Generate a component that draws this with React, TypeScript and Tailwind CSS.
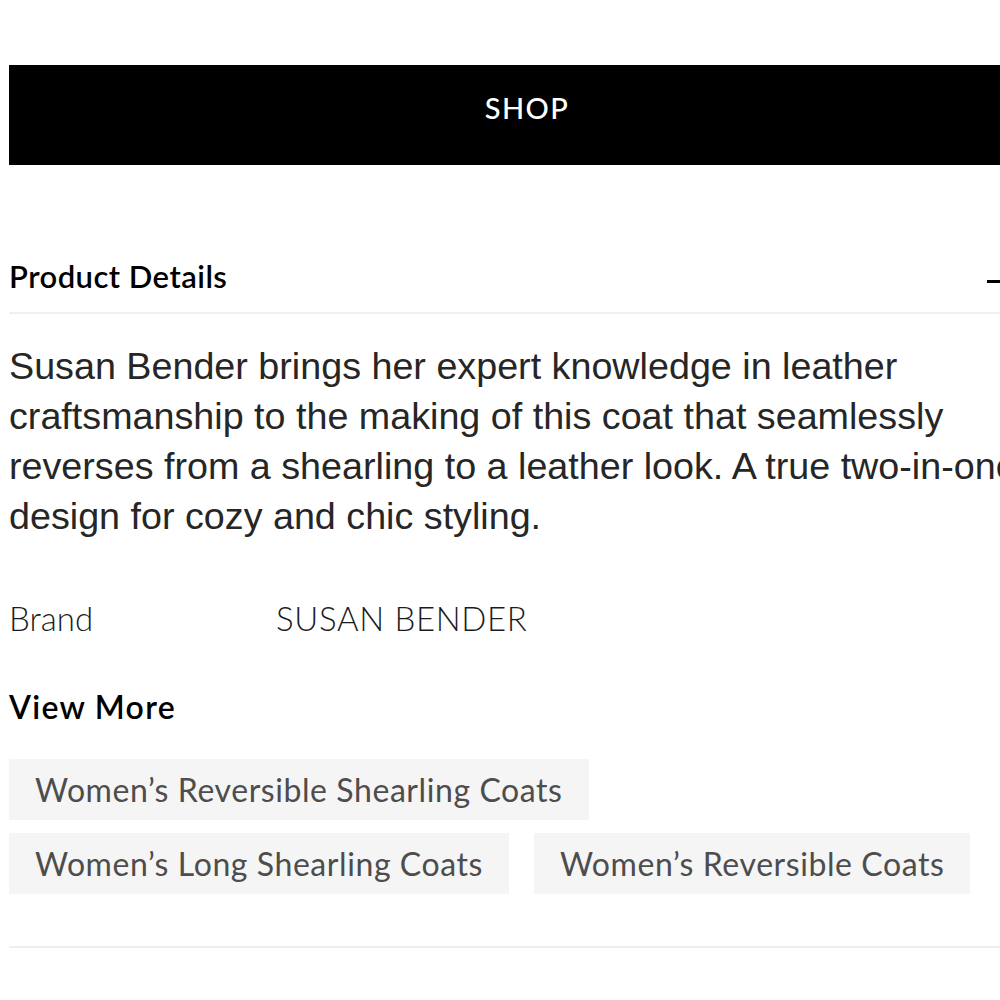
const chips = [
  "Women’s Reversible Shearling Coats",
  "Women’s Long Shearling Coats",
  "Women’s Reversible Coats",
];

const jost = "font-['Lato','Noto_Sans',sans-serif]";

export default function App() {
  return (
    <div className="w-[1000px] h-[1000px] overflow-hidden bg-white">
      <div className="ml-[9px] w-[1036px] pt-[65px]">
        <button
          className={`w-full h-[100px] pb-[15px] bg-black text-white flex items-center justify-center text-[29px] font-medium tracking-[0.05em] ${jost}`}
        >
          SHOP
        </button>

        <div className="mt-[75px] h-[74px] flex items-center justify-between pr-[38px] border-b-2 border-[#f0f0f0]">
          <h2 className={`text-[31px] font-semibold tracking-[0.015em] text-black ${jost}`}>
            Product Details
          </h2>
          <span className="block w-[20px] h-[3px] bg-black mt-[10px]" />
        </div>

        <p className="mt-[27px] text-[37.7px] leading-[50px] text-[#262626] font-['Liberation_Sans',Arial,sans-serif]">
          Susan Bender brings her expert knowledge in leather craftsmanship to
          the making of this coat that seamlessly reverses from a shearling to
          a leather look. A true two-in-one design for cozy and chic styling.
        </p>

        <div className={`mt-[58px] flex h-[40px] items-center text-[33px] font-light text-[#1c1c1c] ${jost}`}>
          <span className="w-[267px]">Brand</span>
          <span className="tracking-[0.02em]">SUSAN BENDER</span>
        </div>

        <h3 className={`mt-[48px] h-[40px] flex items-center text-[32px] font-semibold tracking-[0.04em] text-black ${jost}`}>
          View More
        </h3>

        <div className="mt-[32px] flex flex-wrap gap-x-[25px] gap-y-[13px]">
          {chips.map((c) => (
            <a
              key={c}
              className={`h-[61px] px-[26px] flex items-center bg-[#f5f5f5] text-[#4d4d4d] text-[32px] tracking-[0.018em] ${jost}`}
            >
              {c}
            </a>
          ))}
        </div>

        <div className="mt-[52px] border-b-2 border-[#eeeeee]" />
      </div>
    </div>
  );
}
